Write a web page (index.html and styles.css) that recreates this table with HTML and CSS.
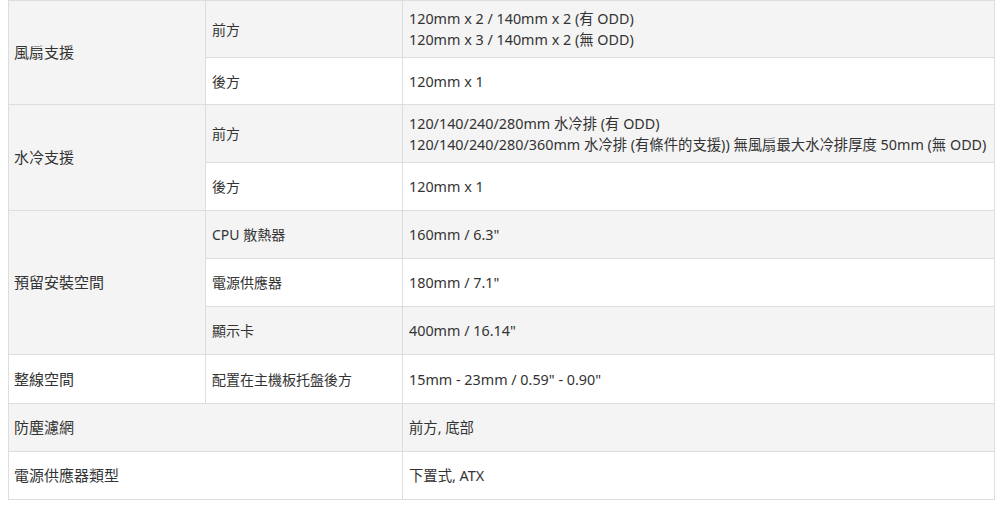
FILE: index.html
```html
<!DOCTYPE html>
<html lang="zh-Hant">
<head>
<meta charset="utf-8">
<title>規格</title>
<link rel="stylesheet" href="styles.css">
</head>
<body>
<table class="spec">
  <colgroup>
    <col class="c1"><col class="c2"><col class="c3">
  </colgroup>
  <tbody>
    <tr class="two">
      <td class="k" rowspan="2">風扇支援</td>
      <td>前方</td>
      <td class="v">120mm x 2 / 140mm x 2 (有 ODD)<br>120mm x 3 / 140mm x 2 (無 ODD)</td>
    </tr>
    <tr class="short">
      <td>後方</td>
      <td class="v">120mm x 1</td>
    </tr>
    <tr class="two tall">
      <td class="k" rowspan="2">水冷支援</td>
      <td>前方</td>
      <td class="v">120/140/240/280mm 水冷排 (有 ODD)<br>120/140/240/280/360mm 水冷排 (有條件的支援)) 無風扇最大水冷排厚度 50mm (無 ODD)</td>
    </tr>
    <tr>
      <td>後方</td>
      <td class="v">120mm x 1</td>
    </tr>
    <tr>
      <td class="k" rowspan="3">預留安裝空間</td>
      <td>CPU 散熱器</td>
      <td class="v">160mm / 6.3"</td>
    </tr>
    <tr>
      <td>電源供應器</td>
      <td class="v">180mm / 7.1"</td>
    </tr>
    <tr>
      <td>顯示卡</td>
      <td class="v">400mm / 16.14"</td>
    </tr>
    <tr class="wide">
      <td class="k">整線空間</td>
      <td>配置在主機板托盤後方</td>
      <td class="v">15mm - 23mm / 0.59" - 0.90"</td>
    </tr>
    <tr>
      <td class="k" colspan="2">防塵濾網</td>
      <td class="v">前方, 底部</td>
    </tr>
    <tr>
      <td class="k" colspan="2">電源供應器類型</td>
      <td class="v">下置式, ATX</td>
    </tr>
  </tbody>
</table>
</body>
</html>
```

FILE: styles.css
```css
html, body {
  margin: 0;
  padding: 0;
  background: #ffffff;
}

body {
  padding-left: 8px;
  font-family: "Noto Sans", "Noto Sans CJK TC", sans-serif;
  font-size: 14px;
  color: #333333;
}

.spec {
  width: 987px;
  border-collapse: collapse;
  table-layout: fixed;
  border: 1px solid #dddddd;
}

.spec .c1 { width: 197px; }
.spec .c2 { width: 197px; }

.spec td {
  border: 1px solid #dddddd;
  padding: 7px 6px;
  height: 33px;
  line-height: 21px;
  vertical-align: middle;
  text-align: left;
}

.spec td.k {
  font-size: 15px;
  padding-left: 5px;
}

.spec td.v {
  font-size: 14.35px;
}

.spec tr.two td {
  height: 42px;
}

.spec tr.two.tall td {
  height: 43px;
}

.spec tr.short td {
  height: 32px;
}

.spec tr.wide td {
  height: 34px;
}

.spec tr:nth-child(odd) td {
  background: #f4f4f4;
}

.spec tr:nth-child(even) td {
  background: #ffffff;
}
```
